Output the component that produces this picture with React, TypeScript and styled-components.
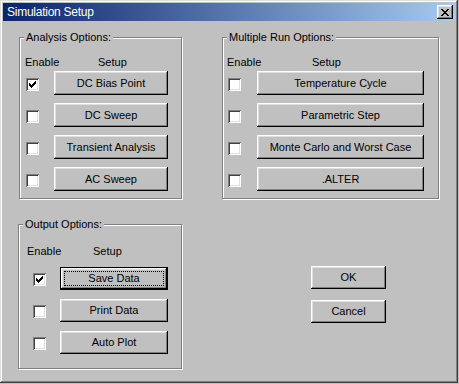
import React from "react";
import styled, { createGlobalStyle, css } from "styled-components";

const GlobalStyle = createGlobalStyle`
  html, body {
    margin: 0;
    padding: 0;
    background: #c0c0c0;
  }
  body {
    font-family: "Liberation Sans", Arial, sans-serif;
    font-size: 11px;
    color: #000;
  }
`;

const raised = css`
  box-shadow: inset -1px -1px #000, inset 1px 1px #fff,
    inset -2px -2px #808080, inset 2px 2px #dfdfdf;
`;

const Window = styled.div`
  box-sizing: border-box;
  width: 458px;
  height: 383px;
  padding: 3px;
  background: #c0c0c0;
  box-shadow: inset -1px -1px #404040, inset 1px 1px #dfdfdf,
    inset -2px -2px #808080, inset 2px 2px #fff;
  display: flex;
  flex-direction: column;
`;

const TitleBar = styled.div`
  height: 18px;
  display: flex;
  align-items: center;
  justify-content: space-between;
  padding: 0 2px 0 4px;
  background: linear-gradient(to right, #0a246a, #a6caf0);
`;

const Title = styled.span`
  color: #fff;
  font-size: 12px;
  letter-spacing: -0.25px;
  line-height: 18px;
`;

const CloseBox = styled.div`
  width: 16px;
  height: 14px;
  display: flex;
  align-items: center;
  justify-content: center;
  background: #c0c0c0;
  ${raised}
`;

const Content = styled.div`
  display: grid;
  grid-template-columns: 163px 217px;
  grid-template-rows: 162px 145px;
  column-gap: 40px;
  row-gap: 25px;
  padding: 16px 0 0 16px;
`;

const Frame = styled.div<{ $w: number; $h: number; $shift?: number }>`
  box-sizing: border-box;
  width: ${(p) => p.$w}px;
  height: ${(p) => p.$h}px;
  margin-left: ${(p) => p.$shift ?? 0}px;
  border: 1px solid #808080;
  box-shadow: inset 1px 1px #fff, 1px 1px #fff;
`;

const Legend = styled.div`
  width: fit-content;
  margin: -7px 0 0 4px;
  padding: 0 2px;
  line-height: 13px;
  background: #c0c0c0;
`;

const Header = styled.div<{ $top: number; $enable: number; $setup: number }>`
  display: grid;
  grid-template-columns: ${(p) => p.$setup - p.$enable}px auto;
  padding-left: ${(p) => p.$enable}px;
  margin-top: ${(p) => p.$top}px;
  line-height: 13px;
`;

const Rows = styled.div<{ $top: number; $gap: number }>`
  display: flex;
  flex-direction: column;
  gap: ${(p) => p.$gap}px;
  margin-top: ${(p) => p.$top}px;
`;

const Row = styled.div<{ $left: number; $space: number }>`
  display: flex;
  align-items: flex-start;
  gap: ${(p) => p.$space}px;
  padding-left: ${(p) => p.$left}px;
`;

const CheckBox = styled.span<{ $drop: number }>`
  box-sizing: border-box;
  width: 13px;
  height: 13px;
  margin-top: ${(p) => p.$drop}px;
  padding: 3px;
  background: #fff;
  box-shadow: inset 1px 1px #808080, inset -1px -1px #fff,
    inset 2px 2px #404040, inset -2px -2px #dfdfdf;
  display: flex;
`;

const Button = styled.button<{ $w: number; $h: number; $default?: boolean }>`
  box-sizing: border-box;
  width: ${(p) => p.$w}px;
  height: ${(p) => p.$h}px;
  padding: 0;
  border: ${(p) => (p.$default ? "1px solid #000" : "none")};
  background: #c0c0c0;
  font: inherit;
  color: #000;
  line-height: 13px;
  text-align: center;
  ${raised}
  ${(p) =>
    p.$default &&
    css`
      outline: 1px dotted #000;
      outline-offset: -5px;
    `}
`;

const Actions = styled.div`
  display: flex;
  flex-direction: column;
  gap: 11px;
  padding: 42px 0 0 89px;
`;

const Tick = () => (
  <svg width="7" height="7" viewBox="0 0 7 7" shapeRendering="crispEdges">
    <path
      fill="#000"
      d="M6 0h1v1h-1z M5 1h2v1h-2z M0 2h1v1h-1z M4 2h3v1h-3z M0 3h2v1h-2z M3 3h3v1h-3z M0 4h5v1h-5z M1 5h3v1h-3z M2 6h1v1h-1z"
    />
  </svg>
);

const CloseGlyph = () => (
  <svg width="8" height="7" viewBox="0 0 8 7" shapeRendering="crispEdges">
    <path
      fill="#000"
      d="M0 0h2v1h-2z M6 0h2v1h-2z M1 1h2v1h-2z M5 1h2v1h-2z M2 2h4v1h-4z M3 3h2v1h-2z M2 4h4v1h-4z M1 5h2v1h-2z M5 5h2v1h-2z M0 6h2v1h-2z M6 6h2v1h-2z"
    />
  </svg>
);

type Option = { label: string; checked?: boolean; isDefault?: boolean };

type GroupProps = {
  title: string;
  w: number;
  h: number;
  shift?: number;
  headerTop: number;
  enableX: number;
  setupX: number;
  rowsTop: number;
  rowGap: number;
  checkX: number;
  checkDrop: number;
  space: number;
  btnW: number;
  btnH: number;
  options: Option[];
};

const OptionGroup: React.FC<GroupProps> = (g) => (
  <Frame $w={g.w} $h={g.h} $shift={g.shift}>
    <Legend>{g.title}</Legend>
    <Header $top={g.headerTop} $enable={g.enableX} $setup={g.setupX}>
      <span>Enable</span>
      <span>Setup</span>
    </Header>
    <Rows $top={g.rowsTop} $gap={g.rowGap}>
      {g.options.map((o) => (
        <Row key={o.label} $left={g.checkX} $space={g.space}>
          <CheckBox $drop={g.checkDrop}>{o.checked && <Tick />}</CheckBox>
          <Button $w={g.btnW} $h={g.btnH} $default={o.isDefault}>
            {o.label}
          </Button>
        </Row>
      ))}
    </Rows>
  </Frame>
);

const analysis: Option[] = [
  { label: "DC Bias Point", checked: true },
  { label: "DC Sweep" },
  { label: "Transient Analysis" },
  { label: "AC Sweep" },
];

const multiRun: Option[] = [
  { label: "Temperature Cycle" },
  { label: "Parametric Step" },
  { label: "Monte Carlo and Worst Case" },
  { label: ".ALTER" },
];

const output: Option[] = [
  { label: "Save Data", checked: true, isDefault: true },
  { label: "Print Data" },
  { label: "Auto Plot" },
];

export default function App() {
  return (
    <>
      <GlobalStyle />
      <Window>
        <TitleBar>
          <Title>Simulation Setup</Title>
          <CloseBox>
            <CloseGlyph />
          </CloseBox>
        </TitleBar>
        <Content>
          <OptionGroup
            title="Analysis Options:"
            w={163}
            h={162}
            headerTop={12}
            enableX={5}
            setupX={78}
            rowsTop={2}
            rowGap={8}
            checkX={6}
            checkDrop={7}
            space={15}
            btnW={114}
            btnH={24}
            options={analysis}
          />
          <OptionGroup
            title="Multiple Run Options:"
            w={217}
            h={162}
            headerTop={12}
            enableX={4}
            setupX={89}
            rowsTop={2}
            rowGap={8}
            checkX={5}
            checkDrop={7}
            space={16}
            btnW={167}
            btnH={24}
            options={multiRun}
          />
          <OptionGroup
            title="Output Options:"
            w={164}
            h={145}
            shift={-1}
            headerTop={14}
            enableX={8}
            setupX={74}
            rowsTop={9}
            rowGap={9}
            checkX={14}
            checkDrop={6}
            space={14}
            btnW={108}
            btnH={23}
            options={output}
          />
          <Actions>
            <Button $w={75} $h={23}>OK</Button>
            <Button $w={75} $h={23}>Cancel</Button>
          </Actions>
        </Content>
      </Window>
    </>
  );
}
